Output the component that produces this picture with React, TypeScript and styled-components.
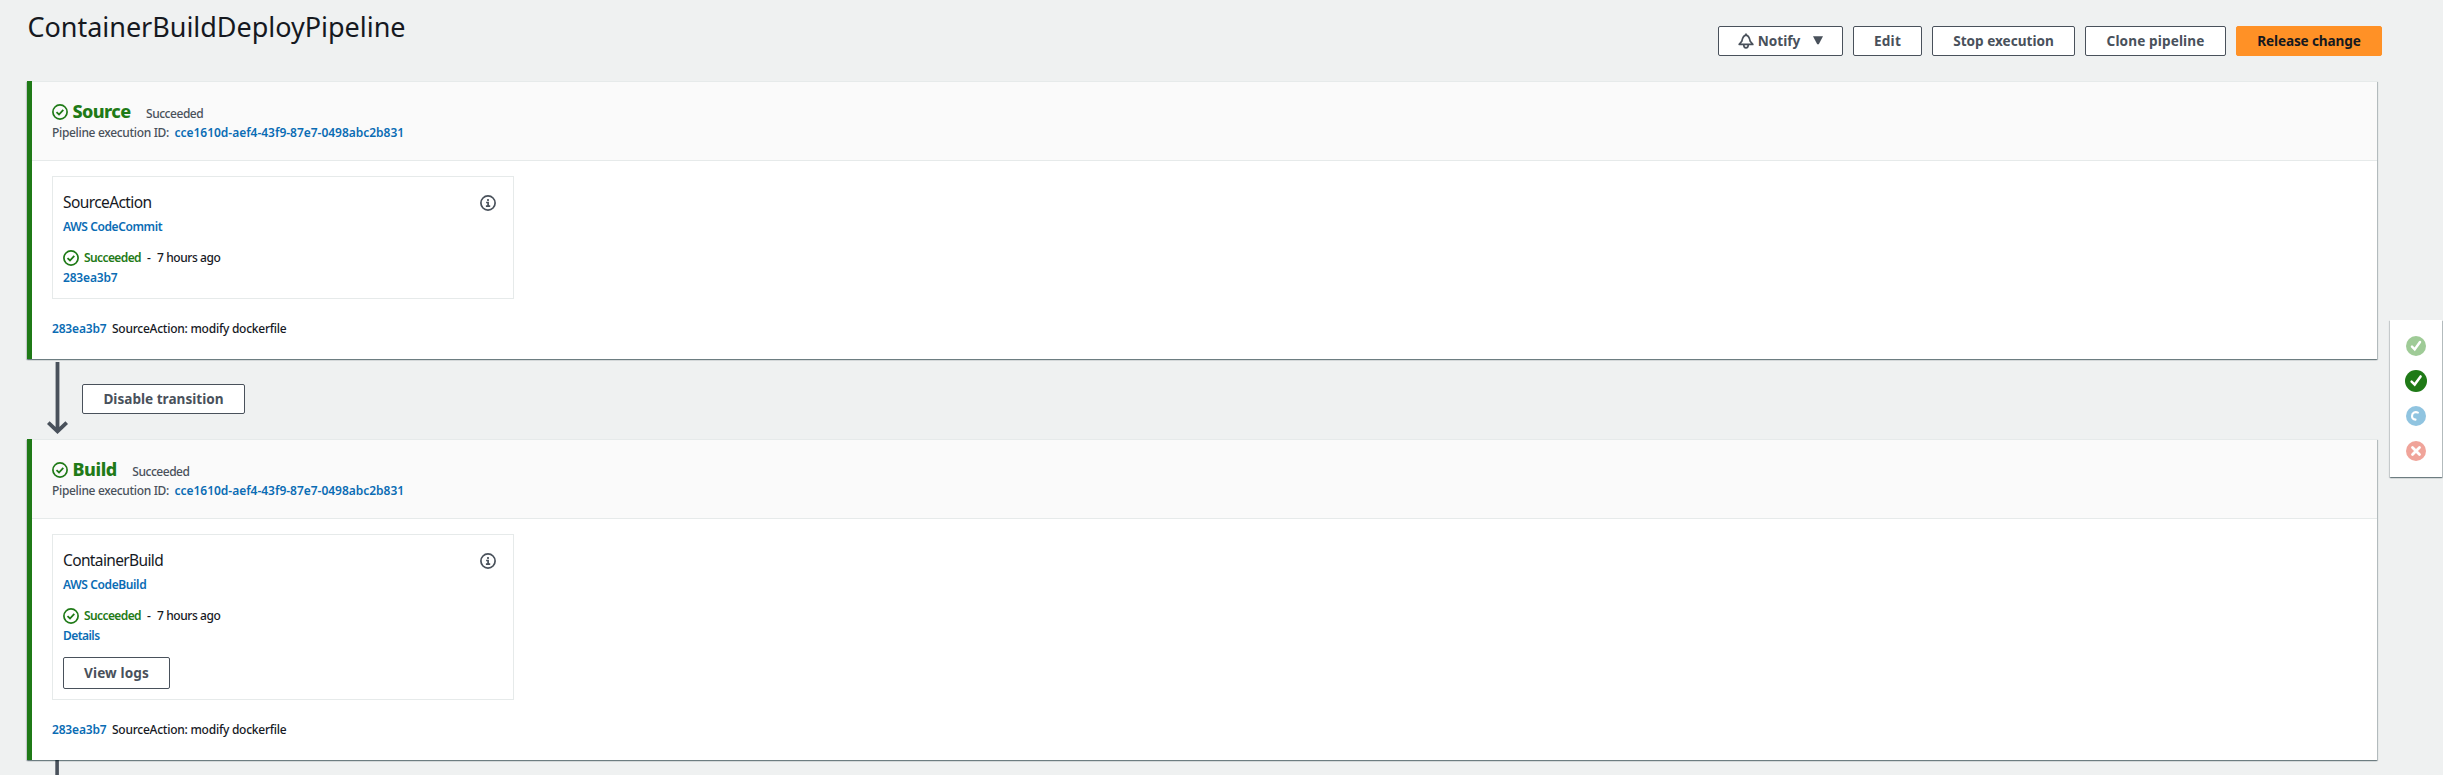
import React from "react";
import styled, { createGlobalStyle, css } from "styled-components";

const color = {
  page: "#eff1f1",
  panelHead: "#fafafa",
  line: "#e6eaea",
  text: "#16191f",
  muted: "#49515b",
  link: "#0a6cb4",
  success: "#1f7a17",
  orange: "#ff9126",
};

const GlobalStyle = createGlobalStyle`
  *, *::before, *::after { box-sizing: border-box; }
  html, body { margin: 0; background: ${color.page}; }
  body {
    height: 775px;
    overflow: hidden;
    font-family: "Noto Sans", "Open Sans", sans-serif;
    font-size: 12px;
    line-height: 20px;
    font-weight: 500;
    color: ${color.text};
  }
`;

const raisedShadow = css`
  box-shadow: 0 1px 1px 0 rgba(0, 28, 36, 0.35), 1px 1px 1px 0 rgba(0, 28, 36, 0.2),
    -1px 1px 1px 0 rgba(0, 28, 36, 0.12);
`;

const Page = styled.div`
  display: grid;
  grid-template-columns: 2390px 52px;
  height: 775px;
  overflow: hidden;
`;

const Main = styled.main`
  display: flex;
  flex-direction: column;
  padding-left: 27px;
`;

const TopBar = styled.header`
  display: flex;
  justify-content: space-between;
  height: 81px;
  padding-right: 8px;
`;

const Title = styled.h1`
  margin: 9px 0 0 0.5px;
  font-size: 27px;
  line-height: 36px;
  font-weight: 430;
  letter-spacing: -0.03px;
`;

const ButtonRow = styled.div`
  display: flex;
  gap: 10px;
  align-items: flex-start;
  margin-top: 26px;
`;

const Button = styled.button<{ $width: number; $primary?: boolean; $tall?: boolean; $track?: number }>`
  display: flex;
  align-items: center;
  justify-content: center;
  width: ${(p) => p.$width}px;
  height: ${(p) => (p.$tall ? 32 : 30)}px;
  padding: 0 0 1px;
  border: 1px solid ${(p) => (p.$primary ? color.orange : color.muted)};
  border-radius: 2px;
  background: ${(p) => (p.$primary ? color.orange : "#fff")};
  color: ${(p) => (p.$primary ? color.text : color.muted)};
  font: 700 13.6px/20px "Noto Sans", "Open Sans", sans-serif;
  letter-spacing: ${(p) => p.$track ?? 0}px;
  white-space: nowrap;
`;

const ButtonLabel = styled.span`
  margin: 0 13px 0 4px;
`;

const Panel = styled.section`
  width: 2350px;
  border-top: 1px solid ${color.line};
  background: linear-gradient(${color.success}, ${color.success}) 0 0 / 5px 100% no-repeat, #fff;
  padding-left: 5px;
  position: relative;
  ${raisedShadow}
  &::before {
    content: "";
    position: absolute;
    left: 0;
    top: -1px;
    width: 5px;
    height: 1px;
    background: ${color.success};
  }
`;

const PanelHead = styled.div`
  height: 79px;
  padding: 18px 20px 0;
  border-bottom: 1px solid ${color.line};
  background: ${color.panelHead};
  color: ${color.muted};
`;

const StageRow = styled.div`
  display: flex;
  align-items: baseline;
  height: 23px;
  line-height: 23px;
`;

const StageIcon = styled.span`
  align-self: flex-start;
  display: flex;
  width: 16px;
  margin: 4px 4.5px 0 0;
`;

const StageName = styled.h2<{ $track: number }>`
  margin: 0 15.5px 0 0;
  font-size: 18px;
  line-height: 23px;
  font-weight: 800;
  letter-spacing: ${(p) => p.$track}px;
  color: ${color.success};
`;

const Text = styled.span<{ $track?: number }>`
  letter-spacing: ${(p) => p.$track ?? 0}px;
  white-space: nowrap;
`;

const Link = styled.a<{ $track?: number }>`
  color: ${color.link};
  font-weight: 650;
  letter-spacing: ${(p) => p.$track ?? 0}px;
  white-space: nowrap;
`;

const InlineRow = styled.div`
  display: flex;
  gap: 5.5px;
`;

const PanelBody = styled.div`
  padding: 15px 20px 20px;
`;

const Card = styled.article`
  width: 462px;
  margin-bottom: 20px;
  padding: 13px 10px 10px;
  border: 1px solid ${color.line};
`;

const CardHead = styled.div`
  display: flex;
  justify-content: space-between;
  height: 27px;
  padding-right: 7px;
`;

const CardTitle = styled.h3<{ $track: number }>`
  margin: 0;
  font-size: 15.5px;
  line-height: 24px;
  font-weight: 450;
  letter-spacing: ${(p) => p.$track}px;
`;

const InfoIconSlot = styled.span`
  display: flex;
  height: 16px;
  margin-top: 5px;
`;

const StatusRow = styled.div`
  display: flex;
  align-items: center;
  height: 20px;
  margin-top: 11px;
`;

const StatusText = styled.span`
  margin: 0 6px 0 5px;
  color: ${color.success};
  font-weight: 650;
  letter-spacing: -0.6px;
`;

const Dash = styled.span`
  width: 10px;
`;

const CardActions = styled.div`
  margin-top: 11px;
`;

const Transition = styled.div`
  display: flex;
  height: 80px;
  padding-left: 20px;
`;

const ArrowSlot = styled.div`
  width: 35px;
  padding-top: 3px;
`;

const TransitionButton = styled.div`
  margin-top: 25px;
`;

const StatusNav = styled.aside`
  display: flex;
  flex-direction: column;
  align-items: center;
  gap: 13px;
  height: 157px;
  margin-top: 320px;
  padding-top: 15px;
  background: #fff;
  ${raisedShadow}
`;

const NavDot = styled.svg`
  display: block;
  width: 22px;
  height: 22px;
`;

const CheckCircle = () => (
  <svg width="16" height="16" viewBox="0 0 16 16" fill="none" stroke={color.success}>
    <circle cx="8" cy="8" r="7.1" strokeWidth="1.7" />
    <path d="M4.5 8.2 7 10.5 11.3 5.9" strokeWidth="1.8" />
  </svg>
);

const InfoCircle = () => (
  <svg width="16" height="16" viewBox="0 0 16 16" fill="none" stroke={color.muted}>
    <circle cx="8" cy="8" r="7.1" strokeWidth="1.7" />
    <path d="M8 3.9v2M6.1 7.5H8.1V11M5.9 11.1h4.3" strokeWidth="1.7" />
  </svg>
);

const Bell = () => (
  <svg width="16" height="16" viewBox="0 0 16 16" fill="none" stroke={color.muted} strokeWidth="1.7" strokeLinejoin="round">
    <path d="M1.2 11.4h13.6L12.2 8.3C11.4 4.6 10.5 2.4 8 2.2 5.5 2.4 4.6 4.6 3.8 8.3Z" />
    <path d="M8 2.4V.4M5.7 11.5c.1 4.6 4.5 4.6 4.6 0" />
  </svg>
);

const Caret = () => (
  <svg width="10" height="9" viewBox="0 0 10 9" fill={color.muted}>
    <path d="M0 .3h10L5.8 8.3H4.2Z" />
  </svg>
);

const DownArrow = () => (
  <svg width="21" height="73" viewBox="0 0 21 73" fill="none" stroke={color.muted} strokeWidth="3.8">
    <path d="M10.5 0v70M1.3 60.6l9.2 8.8 9.2-8.8" />
  </svg>
);

const LineStub = () => (
  <svg width="21" height="15" viewBox="0 0 21 15" stroke={color.muted} strokeWidth="3.6">
    <path d="M10.1 0v15" />
  </svg>
);

const DotCheck = ({ active }: { active?: boolean }) => (
  <NavDot viewBox="-11 -11 22 22" fill="none">
    <circle r={active ? 11 : 10} fill={active ? color.success : "#9fcb97"} />
    <path
      d={active ? "M-4.4 .6-1.3 3.6 4.6-4.6" : "M-4 .7-1.3 3.4 4-4"}
      stroke="#fff"
      strokeWidth="2.5"
      strokeLinecap="round"
    />
  </NavDot>
);

const DotProgress = () => (
  <NavDot viewBox="-11 -11 22 22" fill="none">
    <circle r="10" fill="#90c4e0" />
    <path d="M1.9-3.4C-1.2-4.9-4 -2.8-4 .2-4 2.5-2.5 3.4-.5 3.6" stroke="#fff" strokeWidth="2.1" strokeLinecap="round" />
  </NavDot>
);

const DotError = () => (
  <NavDot viewBox="-11 -11 22 22" fill="none">
    <circle r="10" fill="#f0a49a" />
    <path d="M-3.5-3.5 3.5 3.5M3.5-3.5-3.5 3.5" stroke="#fff" strokeWidth="2.8" strokeLinecap="round" />
  </NavDot>
);

type Label = { text: string; track: number };

type StageProps = {
  name: Label;
  action: Label;
  provider: Label;
  detail: Label;
  logs?: boolean;
};

const Stage = ({ name, action, provider, detail, logs }: StageProps) => (
  <Panel>
    <PanelHead>
      <StageRow>
        <StageIcon>
          <CheckCircle />
        </StageIcon>
        <StageName $track={name.track}>{name.text}</StageName>
        <Text $track={-0.47}>Succeeded</Text>
      </StageRow>
      <InlineRow>
        <Text $track={-0.33}>Pipeline execution ID:</Text>
        <Link $track={-0.02}>cce1610d-aef4-43f9-87e7-0498abc2b831</Link>
      </InlineRow>
    </PanelHead>
    <PanelBody>
      <Card>
        <CardHead>
          <CardTitle $track={action.track}>{action.text}</CardTitle>
          <InfoIconSlot>
            <InfoCircle />
          </InfoIconSlot>
        </CardHead>
        <InlineRow>
          <Link $track={provider.track}>{provider.text}</Link>
        </InlineRow>
        <StatusRow>
          <CheckCircle />
          <StatusText>Succeeded</StatusText>
          <Dash>-</Dash>
          <Text $track={-0.42}>7 hours ago</Text>
        </StatusRow>
        <InlineRow>
          <Link $track={detail.track}>{detail.text}</Link>
        </InlineRow>
        {logs && (
          <CardActions>
            <Button $width={107} $tall $track={0.12}>
              View logs
            </Button>
          </CardActions>
        )}
      </Card>
      <InlineRow>
        <Link $track={-0.18}>283ea3b7</Link>
        <Text $track={-0.24}>SourceAction: modify dockerfile</Text>
      </InlineRow>
    </PanelBody>
  </Panel>
);

export default function App() {
  return (
    <>
      <GlobalStyle />
      <Page>
        <Main>
          <TopBar>
            <Title>ContainerBuildDeployPipeline</Title>
            <ButtonRow>
              <Button $width={125}>
                <Bell />
                <ButtonLabel>Notify</ButtonLabel>
                <Caret />
              </Button>
              <Button $width={69} $track={0.2}>
                Edit
              </Button>
              <Button $width={143}>Stop execution</Button>
              <Button $width={141} $track={0.12}>
                Clone pipeline
              </Button>
              <Button $width={146} $primary $track={-0.14}>
                Release change
              </Button>
            </ButtonRow>
          </TopBar>
          <Stage
            name={{ text: "Source", track: -0.6 }}
            action={{ text: "SourceAction", track: -0.6 }}
            provider={{ text: "AWS CodeCommit", track: -0.4 }}
            detail={{ text: "283ea3b7", track: -0.18 }}
          />
          <Transition>
            <ArrowSlot>
              <DownArrow />
            </ArrowSlot>
            <TransitionButton>
              <Button $width={163}>Disable transition</Button>
            </TransitionButton>
          </Transition>
          <Stage
            name={{ text: "Build", track: -0.45 }}
            action={{ text: "ContainerBuild", track: -0.63 }}
            provider={{ text: "AWS CodeBuild", track: -0.38 }}
            detail={{ text: "Details", track: -0.55 }}
            logs
          />
          <Transition>
            <LineStub />
          </Transition>
        </Main>
        <StatusNav>
          <DotCheck />
          <DotCheck active />
          <DotProgress />
          <DotError />
        </StatusNav>
      </Page>
    </>
  );
}
